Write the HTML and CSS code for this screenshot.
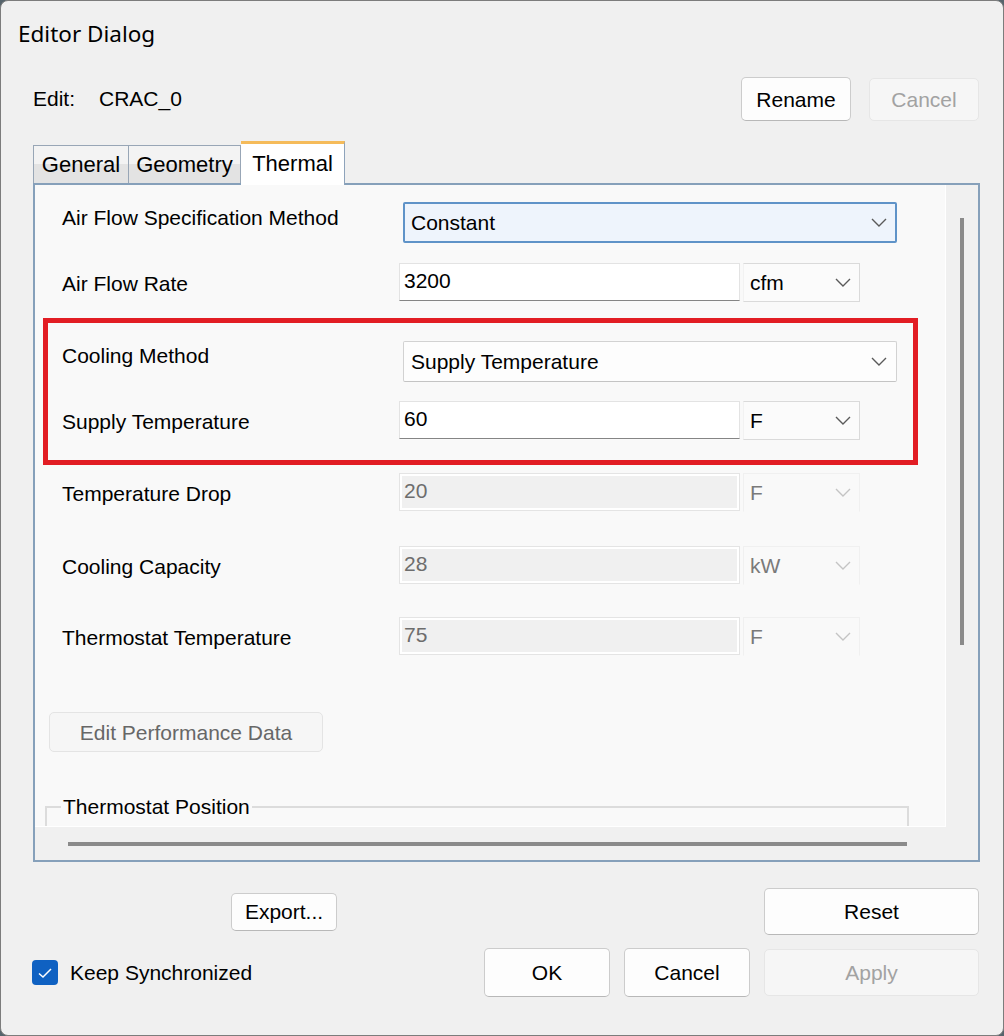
FILE: index.html
```html
<!DOCTYPE html>
<html lang="en">
<head>
    <meta charset="UTF-8">
    <title>Editor Dialog</title>
    <link rel="stylesheet" href="styles.css">
</head>
<body>
    <div class="window">
        <div class="titlebar">Editor Dialog</div>

        <div class="edit-row">
            <span class="edit-label">Edit:</span>
            <span class="edit-name">CRAC_0</span>
            <button class="btn rename">Rename</button>
            <button class="btn small disabled">Cancel</button>
        </div>

        <div class="tabs">
            <div class="tab general">General</div>
            <div class="tab geometry">Geometry</div>
            <div class="tab active">Thermal</div>
        </div>

        <div class="panel">
            <div class="content">
                <div class="row combo-row first">
                    <span class="label">Air Flow Specification Method</span>
                    <div class="combo focused">
                        <span>Constant</span>
                        <svg class="chev" width="16" height="9" viewBox="0 0 16 9"><path d="M1 1 L8 8 L15 1"/></svg>
                    </div>
                </div>
                <div class="row text-row gap20">
                    <span class="label">Air Flow Rate</span>
                    <div class="textbox">3200</div>
                    <div class="unit">
                        <span>cfm</span>
                        <svg class="chev" width="16" height="9" viewBox="0 0 16 9"><path d="M1 1 L8 8 L15 1"/></svg>
                    </div>
                </div>

                <!-- highlighted block -->
                <div class="highlight">
                    <div class="row combo-row">
                        <span class="label">Cooling Method</span>
                        <div class="combo">
                            <span>Supply Temperature</span>
                            <svg class="chev" width="16" height="9" viewBox="0 0 16 9"><path d="M1 1 L8 8 L15 1"/></svg>
                        </div>
                    </div>
                    <div class="row text-row gap19">
                        <span class="label">Supply Temperature</span>
                        <div class="textbox">60</div>
                        <div class="unit">
                            <span>F</span>
                            <svg class="chev" width="16" height="9" viewBox="0 0 16 9"><path d="M1 1 L8 8 L15 1"/></svg>
                        </div>
                    </div>
                </div>

                <div class="row text-row gap8">
                    <span class="label">Temperature Drop</span>
                    <div class="textbox off">20</div>
                    <div class="unit off">
                        <span>F</span>
                        <svg class="chev" width="16" height="9" viewBox="0 0 16 9"><path d="M1 1 L8 8 L15 1"/></svg>
                    </div>
                </div>
                <div class="row text-row gap34">
                    <span class="label">Cooling Capacity</span>
                    <div class="textbox off">28</div>
                    <div class="unit off">
                        <span>kW</span>
                        <svg class="chev" width="16" height="9" viewBox="0 0 16 9"><path d="M1 1 L8 8 L15 1"/></svg>
                    </div>
                </div>
                <div class="row text-row gap32">
                    <span class="label">Thermostat Temperature</span>
                    <div class="textbox off">75</div>
                    <div class="unit off">
                        <span>F</span>
                        <svg class="chev" width="16" height="9" viewBox="0 0 16 9"><path d="M1 1 L8 8 L15 1"/></svg>
                    </div>
                </div>

                <button class="btn perf">Edit Performance Data</button>

                <fieldset class="group">
                    <legend>Thermostat Position</legend>
                </fieldset>
            </div>
            <div class="vbar"><div class="vthumb"></div></div>
            <div class="hbar"><div class="hthumb"></div></div>
            <div class="corner"></div>
        </div>

        <div class="footer-top">
            <button class="btn export">Export...</button>
            <button class="btn wide">Reset</button>
        </div>
        <div class="footer-bottom">
            <label class="check">
                <span class="box">
                    <svg width="16" height="12" viewBox="0 0 16 12"><path d="M2 6.5 L6 10 L14 2"/></svg>
                </span>
                Keep Synchronized
            </label>
            <button class="btn ok">OK</button>
            <button class="btn ok">Cancel</button>
            <button class="btn wide apply disabled">Apply</button>
        </div>
    </div>
</body>
</html>
```

FILE: styles.css
```css
* {
    box-sizing: border-box;
}
body {
    margin: 0;
    background-color: #56646c;
    font-family: "Liberation Sans", Arial, sans-serif;
    font-size: 21px;
    color: #000;
}
.window {
    width: 1004px;
    height: 1036px;
    background-color: #f0f0f0;
    border: 1px solid #7c7c7c;
    border-radius: 8px;
    overflow: hidden;
    display: flex;
    flex-direction: column;
}
.titlebar {
    height: 64px;
    padding-left: 17px;
    display: flex;
    align-items: center;
    font-family: "Noto Sans", sans-serif;
    font-size: 22.5px;
    color: #000;
}
.btn {
    font-family: inherit;
    font-size: 21px;
    color: #000;
    background-color: #fdfdfd;
    border: 1px solid #cccccc;
    border-bottom-color: #b8b8b8;
    border-radius: 5px;
    padding: 0;
    line-height: 1;
}
.btn.disabled {
    background-color: #f6f6f6;
    border-color: #e6e6e6;
    color: #a2a2a2;
}

/* edit row */
.edit-row {
    margin-top: 12px;
    height: 44px;
    padding: 0 24px 0 32px;
    display: flex;
    align-items: center;
}
.edit-label {
    width: 66px;
}
.edit-name {
    flex: 1;
}
.rename {
    width: 110px;
    height: 44px;
}
.btn.small {
    width: 110px;
    height: 43px;
    margin-left: 18px;
}

/* tabs */
.tabs {
    margin-top: 20px;
    height: 42px;
    padding-left: 32px;
    display: flex;
    align-items: flex-end;
}
.tab {
    height: 38px;
    line-height: 38px;
    font-size: 22px;
    text-align: center;
    border: 1px solid #98a6b6;
    border-bottom: none;
    background: linear-gradient(#f3f3f3 50%, #e3e3e3 50%);
}
.tab.general {
    width: 96px;
}
.tab.geometry {
    width: 112px;
    border-left: none;
}
.tab.active {
    width: 104px;
    height: 44px;
    line-height: 40px;
    margin-bottom: -2px;
    position: relative;
    border-left: none;
    border-color: #8ea3bb;
    border-top: 3px solid #f5bb5a;
    background: #ffffff;
}

/* panel */
.panel {
    margin-left: 32px;
    width: 947px;
    height: 679px;
    border: 2px solid #86a0ba;
    display: grid;
    grid-template-columns: 1fr 32px;
    grid-template-rows: 1fr 33px;
    background-color: #f0f0f0;
}
.content {
    background-color: #f9f9f9;
    border-right: 1px solid #fff;
    border-bottom: 1px solid #fff;
    overflow: hidden;
    padding-top: 17px;
}
.row {
    display: flex;
    padding-left: 27px;
}
.label {
    width: 337px;
    line-height: 24px;
}
.combo-row .label {
    padding-top: 4px;
}
.text-row .label {
    padding-top: 9px;
}
.gap20 { margin-top: 20px; }
.gap19 { margin-top: 19px; }
.gap8 { margin-top: 8px; }
.gap34 { margin-top: 34px; }
.gap32 { margin-top: 32px; }

.combo {
    margin-left: 4px;
    width: 494px;
    height: 41px;
    background-color: #fdfdfd;
    border: 1px solid #d2d2d2;
    border-bottom-color: #c4c4c4;
    border-radius: 2px;
    display: flex;
    align-items: center;
    justify-content: space-between;
    padding: 0 9px 0 7px;
}
.combo.focused {
    background-color: #eef4fc;
    border: 2px solid #5f93c8;
    padding-left: 6px;
    padding-right: 8px;
}
.chev {
    fill: none;
    stroke: #5a5a5a;
    stroke-width: 1.4;
}
.textbox {
    width: 341px;
    height: 38px;
    background-color: #fff;
    border: 1px solid #e3e3e3;
    border-bottom: 1px solid #858585;
    padding-left: 4px;
    line-height: 34px;
}
.textbox.off {
    background-color: #f0f0f0;
    border: 1px solid #e4e4e4;
    box-shadow: inset 0 0 0 2px #ffffff;
    color: #6d6d6d;
}
.unit {
    margin-left: 3px;
    width: 117px;
    height: 39px;
    background-color: #fbfbfb;
    border: 1px solid #dadada;
    border-left-color: #f2f2f2;
    display: flex;
    align-items: center;
    justify-content: space-between;
    padding: 0 8px 0 6px;
}
.unit.off {
    background-color: #f9f9f9;
    border-color: #f0f0f0;
    border-bottom-color: #f9f9f9;
    color: #7a7a7a;
}
.unit.off .chev {
    stroke: #c4c4c4;
}

.highlight {
    margin: 16px 0 0 8px;
    width: 875px;
    border: 5px solid #e21d24;
    padding: 18px 0 20px;
}
.highlight .row {
    padding-left: 14px;
}
.highlight .combo-row .label {
    padding-top: 3px;
}

.btn.perf {
    display: block;
    margin: 56px 0 0 14px;
    width: 274px;
    height: 40px;
    color: #676767;
    background-color: #f6f6f6;
    border-color: #e4e4e4;
}
.group {
    margin: 43px 0 0 10px;
    width: 864px;
    height: 100px;
    border: 2px solid #dcdcdc;
    padding: 0 14px;
}
.group legend {
    padding: 0 2px;
    line-height: 24px;
}

.vthumb {
    margin: 33px 0 0 14px;
    width: 4px;
    height: 427px;
    background-color: #8a8a8a;
}
.hthumb {
    margin: 15px 0 0 33px;
    width: 839px;
    height: 4px;
    background-color: #8a8a8a;
}

/* footer */
.footer-top {
    margin-top: 26px;
    height: 47px;
    padding: 0 24px 0 230px;
    display: flex;
    align-items: center;
    justify-content: space-between;
}
.export {
    width: 106px;
    height: 38px;
}
.btn.wide {
    width: 215px;
    height: 47px;
}
.footer-bottom {
    margin-top: 13px;
    height: 49px;
    padding: 0 24px 0 31px;
    display: flex;
    align-items: center;
}
.check {
    display: flex;
    align-items: center;
    flex: 1;
}
.box {
    width: 26px;
    height: 25px;
    margin-right: 12px;
    border-radius: 4px;
    background-color: #0f61c2;
    display: flex;
    align-items: center;
    justify-content: center;
}
.box svg {
    fill: none;
    stroke: #fff;
    stroke-width: 1.5;
}
.btn.ok {
    width: 126px;
    height: 49px;
    margin-right: 14px;
}
.btn.apply {
    height: 47px;
}
```
